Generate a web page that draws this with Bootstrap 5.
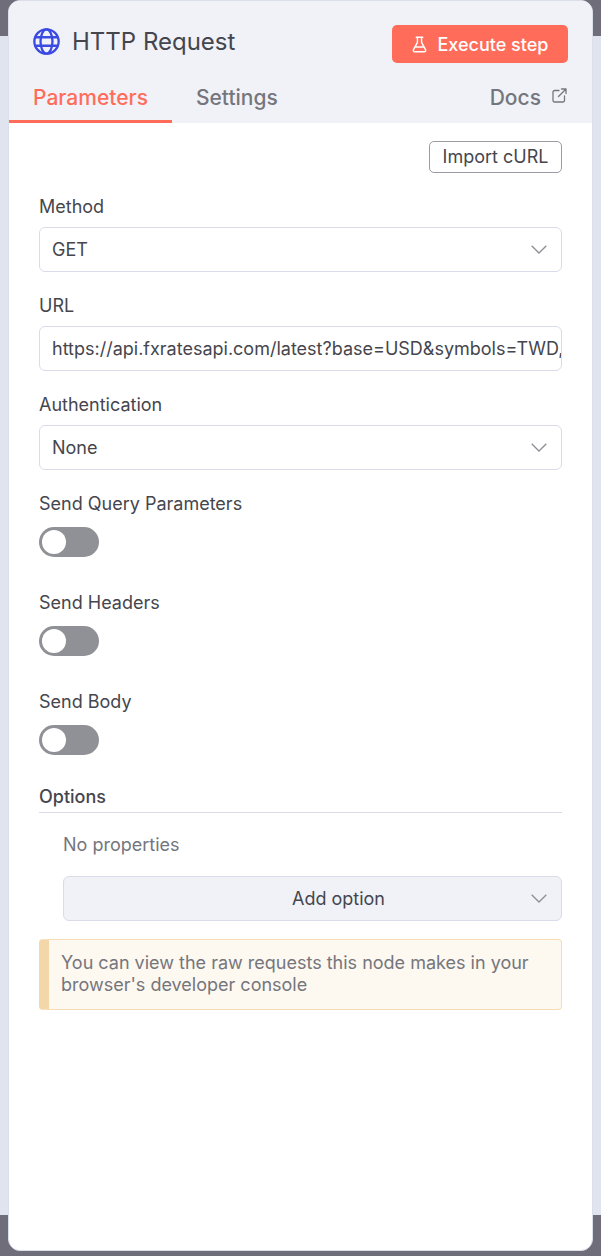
<!DOCTYPE html>
<html lang="en">

<head>
  <meta charset="UTF-8">
  <meta name="viewport" content="width=device-width, initial-scale=1.0">
  <title>HTTP Request</title>
  <link href="https://cdn.jsdelivr.net/npm/bootstrap@5.3.0/dist/css/bootstrap.min.css" rel="stylesheet">
  <style>
    html, body { height: 100%; }
    body {
      margin: 0;
      font-family: Inter, "Liberation Sans", sans-serif;
      font-size: 18px;
      color: #45464d;
      background: linear-gradient(#6f6d7a 0, #6f6d7a 36px, #e0e4ef 36px, #e0e4ef 1215px, #6f6d7a 1215px);
      overflow: hidden;
    }
    .ndv-panel {
      margin-left: 8px;
      width: 585px;
      height: 1251px;
      background: #fff;
      border: 1px solid #dbdfe9;
      border-radius: 12px;
      overflow: hidden;
    }
    .ndv-head { height: 122px; background: #f0f2f8; }
    .ndv-title-row { height: 80px; padding: 0 24px; }
    .ndv-title { font-size: 24px; font-weight: 400; line-height: 1; margin: 1px 0 0 4px; color: #45464d; }
    .run-btn {
      background: #ff6d5a;
      color: #fff;
      border: 0;
      border-radius: 5px;
      width: 176px;
      height: 38px;
      margin-top: 6px;
      font-size: 18px;
      font-weight: 500;
      gap: 11px;
    }
    .ndv-tabs { height: 42px; }
    .ndv-tab { font-size: 21px; font-weight: 500; color: #75767d; line-height: 1; padding: 6px 24px 0; height: 42px; }
    .ndv-tab.is-on { color: #ff6d5a; border-bottom: 3px solid #ff6d5a; }
    .ndv-tab-docs { gap: 11px; padding-right: 25px; }
    .ndv-tab-docs svg { margin-top: 1px; }
    .ndv-body { padding: 18px 30px 0; }
    .curl-btn {
      background: #fff;
      border: 1px solid #9a9ba4;
      border-radius: 5px;
      color: #45464d;
      font-size: 18px;
      height: 32px;
      width: 133px;
      padding: 0;
      line-height: 1;
    }
    .curl-row { margin-bottom: 23px; }
    .fld-label { line-height: 22px; margin-bottom: 9px; color: #45464d; }
    .fld-box {
      height: 45px;
      border: 1px solid #d9dce8;
      border-radius: 6px;
      padding: 0 14px 0 12px;
      font-size: 18px;
      color: #45464d;
      background: #fff;
    }
    input.fld-box { padding-right: 0; width: 100%; box-shadow: none; }
    .fld-group { margin-bottom: 23px; }
    .switch-row { height: 30px; min-height: 0; padding: 0; margin: 0; }
    .switch-row .form-check-input {
      width: 60px;
      height: 30px;
      margin: 0;
      float: none;
      border: 0;
      background-color: #909196;
      background-image: url("data:image/svg+xml,%3csvg xmlns='http://www.w3.org/2000/svg' viewBox='-4 -4 8 8'%3e%3ccircle r='3.2' fill='%23fff'/%3e%3c/svg%3e");
      background-position: left center;
    }
    .tog-group { margin-bottom: 35px; }
    .tog-group .fld-label { margin-bottom: 12px; }
    .opt-head { border-bottom: 1px solid #d9dce8; line-height: 22px; padding-bottom: 4px; font-weight: 500; margin-top: -4px; }
    .opt-inner { padding-left: 24px; }
    .no-props { color: #75767d; line-height: 22px; margin: 21px 0 20px; }
    .add-opt { background: #f0f2f8; }
    .add-opt span { flex: 1; text-align: center; padding-left: 70px; }
    .ndv-note {
      margin-top: 18px;
      height: 71px;
      background: #fdf8f0;
      border: 1px solid #f4ddb5;
      border-left: 10px solid #f4d7a8;
      border-radius: 4px;
      padding: 12px 12px;
      color: #75767d;
      line-height: 22px;
    }
  </style>
</head>

<body>
  <div class="ndv-panel d-flex flex-column">
    <div class="ndv-head">
      <div class="ndv-title-row d-flex align-items-center justify-content-between">
        <div class="d-flex align-items-center gap-2">
          <svg width="27" height="27" viewBox="0 0 28 28" fill="none" stroke="#3b4ae0" stroke-width="2.4">
            <circle cx="14" cy="14" r="12.6"/>
            <ellipse cx="14" cy="14" rx="6.2" ry="12.6"/>
            <path d="M2.4 9.6h23.2M2.4 18.4h23.2"/>
          </svg>
          <h1 class="ndv-title">HTTP Request</h1>
        </div>
        <button class="run-btn d-flex align-items-center justify-content-center">
          <svg width="15" height="17" viewBox="0 0 16 18" fill="none" stroke="#fff" stroke-width="1.5" stroke-linejoin="round" stroke-linecap="round">
            <path d="M4.5 1.2h7M5.8 1.2v5.6L1.6 14.5c-.6 1.1.1 2.3 1.4 2.3h10c1.3 0 2-1.2 1.4-2.3l-4.2-7.7V1.2M3.8 11.6h8.4"/>
          </svg>
          Execute step
        </button>
      </div>
      <div class="ndv-tabs d-flex">
        <div class="ndv-tab is-on">Parameters</div>
        <div class="ndv-tab">Settings</div>
        <div class="ndv-tab ndv-tab-docs ms-auto d-flex">
          <span>Docs</span>
          <svg width="15" height="15" viewBox="0 0 15 15" fill="none" stroke="#75767d" stroke-width="1.3" stroke-linecap="round" stroke-linejoin="round">
            <path d="M7 2.5H2.5a1.5 1.5 0 0 0-1.5 1.5v8.5A1.5 1.5 0 0 0 2.5 14H11a1.5 1.5 0 0 0 1.5-1.5V8M6.5 8.5 14 1M9.5 1H14v4.5"/>
          </svg>
        </div>
      </div>
    </div>
    <div class="ndv-body">
      <div class="d-flex justify-content-end curl-row"><button class="curl-btn">Import cURL</button></div>
      <div class="fld-group">
        <div class="fld-label">Method</div>
        <div class="fld-box d-flex align-items-center justify-content-between">GET
          <svg width="16" height="9" viewBox="0 0 16 9" fill="none" stroke="#8d8e96" stroke-width="1.3"><path d="M.7.7 8 8 15.3.7"/></svg>
        </div>
      </div>
      <div class="fld-group">
        <div class="fld-label">URL</div>
        <input class="form-control fld-box" type="text" value="https://api.fxratesapi.com/latest?base=USD&amp;symbols=TWD,JPY,EUR">
      </div>
      <div class="fld-group">
        <div class="fld-label">Authentication</div>
        <div class="fld-box d-flex align-items-center justify-content-between">None
          <svg width="16" height="9" viewBox="0 0 16 9" fill="none" stroke="#8d8e96" stroke-width="1.3"><path d="M.7.7 8 8 15.3.7"/></svg>
        </div>
      </div>
      <div class="tog-group">
        <div class="fld-label">Send Query Parameters</div>
        <div class="form-check form-switch switch-row"><input class="form-check-input" type="checkbox" role="switch"></div>
      </div>
      <div class="tog-group">
        <div class="fld-label">Send Headers</div>
        <div class="form-check form-switch switch-row"><input class="form-check-input" type="checkbox" role="switch"></div>
      </div>
      <div class="tog-group">
        <div class="fld-label">Send Body</div>
        <div class="form-check form-switch switch-row"><input class="form-check-input" type="checkbox" role="switch"></div>
      </div>
      <div class="opt-head">Options</div>
      <div class="opt-inner">
        <div class="no-props">No properties</div>
        <div class="fld-box add-opt d-flex align-items-center"><span>Add option</span>
          <svg width="16" height="9" viewBox="0 0 16 9" fill="none" stroke="#8d8e96" stroke-width="1.3"><path d="M.7.7 8 8 15.3.7"/></svg>
        </div>
      </div>
      <div class="ndv-note">You can view the raw requests this node makes in your browser's developer console</div>
    </div>
  </div>
  <script src="https://cdn.jsdelivr.net/npm/bootstrap@5.3.0/dist/js/bootstrap.bundle.min.js"></script>
</body>

</html>
